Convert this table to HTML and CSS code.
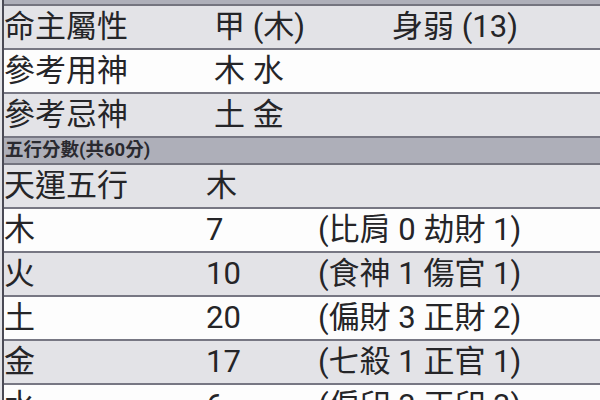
FILE: index.html
```html
<!DOCTYPE html>
<html lang="zh-Hant">
<head>
<meta charset="utf-8">
<title>五行分數</title>
<link rel="stylesheet" href="styles.css">
</head>
<body>
<div class="sheet">
  <div class="head">命局個性</div>
  <div class="row upper alt"><span>命主屬性</span><span>甲 (木)</span><span>身弱 (13)</span></div>
  <div class="row upper"><span>參考用神</span><span>木 水</span><span></span></div>
  <div class="row upper alt"><span>參考忌神</span><span>土 金</span><span></span></div>
  <div class="head">五行分數(共60分)</div>
  <div class="row lower alt"><span>天運五行</span><span>木</span><span></span></div>
  <div class="row lower"><span>木</span><span>7</span><span>(比肩 0 劫財 1)</span></div>
  <div class="row lower alt"><span>火</span><span>10</span><span>(食神 1 傷官 1)</span></div>
  <div class="row lower"><span>土</span><span>20</span><span>(偏財 3 正財 2)</span></div>
  <div class="row lower alt"><span>金</span><span>17</span><span>(七殺 1 正官 1)</span></div>
  <div class="row lower"><span>水</span><span>6</span><span>(偏印 3 正印 3)</span></div>
</div>
</body>
</html>
```

FILE: styles.css
```css
html, body {
  margin: 0;
  padding: 0;
  background: #e4e4e8;
  overflow: hidden;
}
body {
  width: 600px;
  height: 400px;
  font-family: Roboto, "Noto Sans CJK TC", sans-serif;
  color: #252528;
}
.sheet {
  margin-left: 2px;
  margin-top: -21px;
  border-left: 2px solid #4a4a55;
  display: flex;
  flex-direction: column;
}
.head {
  height: 25px;
  line-height: 25px;
  font-size: 18.5px;
  font-weight: 700;
  padding-left: 1px;
  background: #aeafb9;
  border-bottom: 2px solid #74747f;
  color: #2a2a30;
}
.row {
  height: 42px;
  display: grid;
  align-items: center;
  font-size: 31px;
  background: #fdfdfd;
  border-bottom: 2px solid #777783;
  white-space: nowrap;
}
.row.alt {
  background: #e3e3e7;
}
.row.upper {
  grid-template-columns: 210px 178px 1fr;
}
.row.lower {
  grid-template-columns: 202px 112px 1fr;
}
.row span {
  line-height: 42px;
}
```
